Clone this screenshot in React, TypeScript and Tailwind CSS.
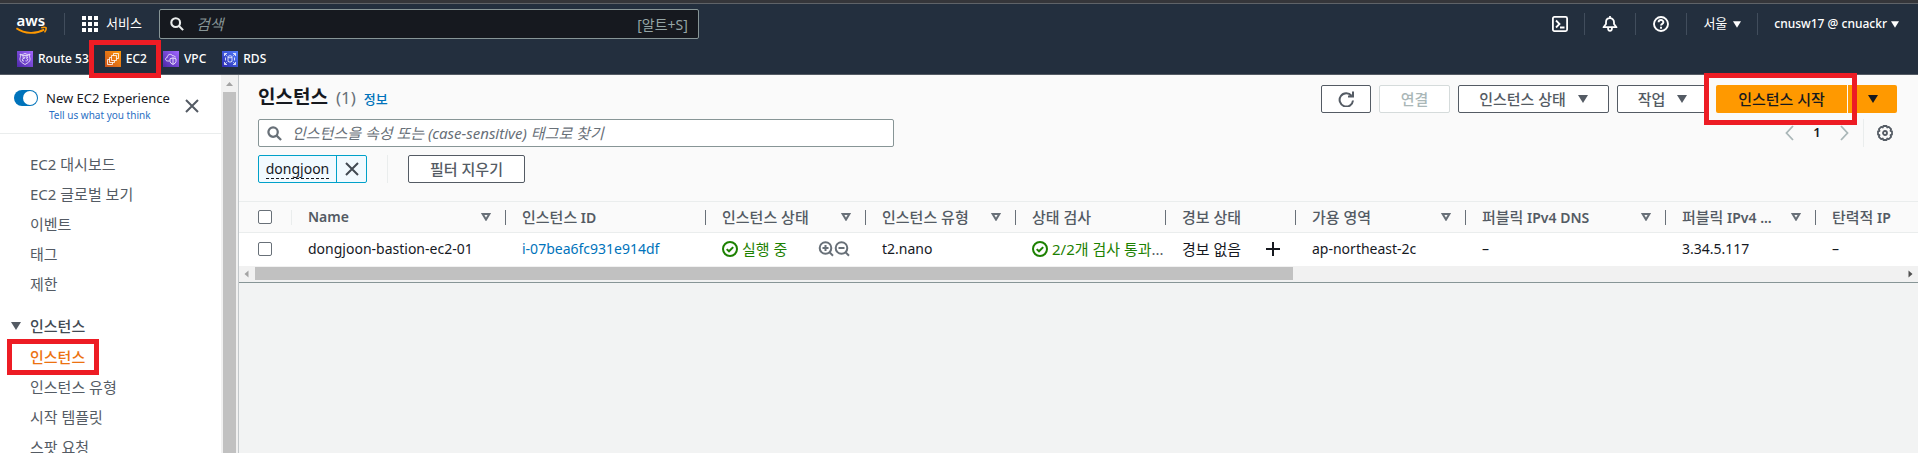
import React from "react";

const SANS = "font-['Noto_Sans','Noto_Sans_CJK_KR',sans-serif]";

function SearchIcon({ className }: { className: string }) {
  return (
    <svg viewBox="0 0 16 16" className={className} fill="none" stroke="currentColor" strokeWidth="2.4" aria-hidden="true">
      <circle cx="6.5" cy="6.5" r="5" />
      <path d="M10 10l5 5" />
    </svg>
  );
}

function CloseIcon({ className }: { className: string }) {
  return (
    <svg viewBox="0 0 14 14" className={className} fill="none" stroke="currentColor" strokeWidth="2" aria-hidden="true">
      <path d="M1 1l12 12M13 1L1 13" />
    </svg>
  );
}

function Caret({ className }: { className: string }) {
  return (
    <svg viewBox="0 0 10 8" className={className} fill="currentColor" aria-hidden="true">
      <path d="M0 0h10L5 8z" />
    </svg>
  );
}

function FilterCaret() {
  return (
    <svg viewBox="0 0 10 8" className="h-2 w-2.5 shrink-0 text-[#687078]" fill="none" stroke="currentColor" strokeWidth="2" aria-hidden="true">
      <path d="M1.6 1h6.8L5 6.600z" />
    </svg>
  );
}

function CheckCircle() {
  return (
    <svg viewBox="0 0 16 16" className="size-4 shrink-0" fill="none" stroke="currentColor" strokeWidth="2" aria-hidden="true">
      <circle cx="8" cy="8" r="7" />
      <path d="M4.7 8.1l2.3 2.2 4.2-4.2" />
    </svg>
  );
}

function Magnifier({ plus }: { plus: boolean }) {
  return (
    <svg viewBox="0 0 16 16" className="size-4 shrink-0" fill="none" stroke="currentColor" strokeWidth="2" aria-hidden="true">
      <circle cx="7.500" cy="7" r="5.8" />
      <path d="M11.500 11.200l3.500 3.500" />
      <path d={plus ? "M4.500 7h6M7.500 4v6" : "M4.500 7h6"} />
    </svg>
  );
}

function AwsLogo() {
  return (
    <svg viewBox="0 0 32 24" className="h-6 w-8 overflow-visible" aria-hidden="true">
      <text x="0.5" y="13.500" fontSize="15" fontWeight="600" fill="#fff" fontFamily="Noto Sans, sans-serif">
        aws
      </text>
      <path d="M0.4 16.200c8.6 6 19.6 6 27.8 1.4" fill="none" stroke="#ff9900" strokeWidth="1.9" />
      <path d="M25.2 15.800c1.8-.6 4-.7 4.8-.2.4 1-.2 3.2-1.5 4.8" fill="none" stroke="#ff9900" strokeWidth="1.5" />
    </svg>
  );
}

function Highlight({ className }: { className: string }) {
  return <span className={`pointer-events-none absolute z-10 border-5 border-[#ed1c24] ${className}`} />;
}

const glyph = "size-4 shrink-0";
const strokes = { fill: "none", stroke: "#fff", strokeWidth: 0.8 } as const;

function Route53Icon() {
  return (
    <svg viewBox="0 0 16 16" className={`${glyph} bg-linear-to-tr from-[#4d27a8] to-[#a166ff]`} aria-hidden="true">
      <path {...strokes} d="M3 3.2c1.5.5 3 .3 5-.7 2 1 3.500 1.200 5 .7-.8 1.600-.5 2.600 0 4.300.5 3-2.500 4.500-5 6-2.500-1.500-5.500-3-5-6 .5-1.700.8-2.700 0-4.300z" />
      <path {...strokes} d="M5.300 6h2v1.500q-2-.3-2 1.300 0 1.700 1.700 1.200M8.500 6h2.200L9.600 7.500q1.700.5.9 1.800-.7 1-2 .5M4.500 4.600h7" />
    </svg>
  );
}

function Ec2Icon() {
  return (
    <svg viewBox="0 0 16 16" className={`${glyph} bg-linear-to-tr from-[#c8511b] to-[#ff9900]`} aria-hidden="true">
      <path {...strokes} d="M6.500 4.500h5v5h-5zM6.500 6.500h-2v5h5v-2M4.500 8.500h-2v5h5v-2M8.500 4.500v-2h5v5h-2" />
    </svg>
  );
}

function VpcIcon() {
  return (
    <svg viewBox="0 0 16 16" className={`${glyph} bg-linear-to-tr from-[#4d27a8] to-[#a166ff]`} aria-hidden="true">
      <path {...strokes} d="M6.500 10H4.500C2 9.800 2 6.700 4.200 6.500 4.300 3.200 8.500 2.200 9.700 5c1.300-.7 2.500.2 2.500 1.500" />
      <path {...strokes} d="M10 6.800l3 1v2.700q-.5 2-3 3-2.500-1-3-3V7.800zM10 7v6" />
    </svg>
  );
}

function RdsIcon() {
  return (
    <svg viewBox="0 0 16 16" className={`${glyph} bg-linear-to-tr from-[#2e27ad] to-[#527fff]`} aria-hidden="true">
      <path {...strokes} d="M2.500 5V2.500H5M11 2.500h2.500V5M2.500 11v2.500H5M11 13.500h2.500V11M2.700 2.700l2 2M13.300 2.700l-2 2M2.700 13.300l2-2M13.300 13.300l-2-2" />
      <ellipse {...strokes} cx="8" cy="5.800" rx="2" ry="1" />
      <path {...strokes} d="M6 5.800v4.600q2 1.500 4 0V5.800M3.500 6.500v3M12.500 6.500v3" />
    </svg>
  );
}

function Divider() {
  return <span className="h-[22px] w-px bg-[#414d5c]" />;
}

function Header() {
  return (
    <header className="border-b border-[#545b64] bg-[#232f3e] text-white">
      <div className="flex h-10 items-center justify-between pr-[19px] pl-4">
        <div className="flex grow items-center">
          <a href="#home" aria-label="AWS">
            <AwsLogo />
          </a>
          <span className="ml-4 h-[22px] w-px bg-[#414d5c]" />
          <button className="ml-[17px] flex items-center gap-2 text-[13px]">
            <svg viewBox="0 0 16 16" className="size-4" fill="currentColor" aria-hidden="true">
              <path d="M0 0h4v4H0zM6 0h4v4H6zM12 0h4v4h-4zM0 6h4v4H0zM6 6h4v4H6zM12 6h4v4h-4zM0 12h4v4H0zM6 12h4v4H6zM12 12h4v4h-4z" />
            </svg>
            서비스
          </button>
          <label className="ml-[17px] flex h-[30px] w-[540px] items-center rounded-xs border border-[#879596] bg-[#16191f] px-2.5">
            <SearchIcon className="size-3.5 shrink-0 text-[#eaeded]" />
            <input
              type="search"
              aria-label="검색"
              placeholder="검색"
              className="ml-3 min-w-0 grow bg-transparent text-[15px] italic outline-none placeholder:text-[#879596]"
            />
            <span className="text-[14px] text-[#95a5a6]">[알트+S]</span>
          </label>
        </div>
        <div className="flex items-center text-[12px] font-medium">
          <button aria-label="CloudShell" className="mr-4">
            <svg viewBox="0 0 16 16" className="size-4" fill="none" stroke="currentColor" strokeWidth="1.8" aria-hidden="true">
              <rect x="0.900" y="0.900" width="14.200" height="14.200" rx="1.500" />
              <path d="M4 4.500L7.500 8 4 11.500M8 11.500h4.500" />
            </svg>
          </button>
          <Divider />
          <button aria-label="알림" className="mx-[17px]">
            <svg viewBox="0 0 16 16" className="size-4" fill="none" stroke="currentColor" strokeWidth="1.800" aria-hidden="true">
              <path d="M1.500 11.200h13L12 8V6.200C12 3.800 10.300 2.200 8 2.200S4 3.800 4 6.200V8zM8 2.200V0M6 11.500c0 4.600 4 4.600 4 0" strokeLinejoin="round" />
            </svg>
          </button>
          <Divider />
          <button aria-label="도움말" className="mx-[17px]">
            <svg viewBox="0 0 16 16" className="size-4" fill="none" stroke="currentColor" strokeWidth="1.900" aria-hidden="true">
              <circle cx="8" cy="8" r="7" />
              <path d="M5.600 6.300c0-3 4.800-3 4.800 0C10.400 8 8 7.800 8 9.600M8 10.800v1.900" />
            </svg>
          </button>
          <Divider />
          <button className="mx-4 flex items-center gap-1.5 font-normal">
            <span className="text-[13px]">서울</span>
            <Caret className="h-[7px] w-2" />
          </button>
          <Divider />
          <button className="ml-4 flex items-center gap-1">
            cnusw17 @ cnuackr
            <Caret className="h-[7px] w-2" />
          </button>
        </div>
      </div>
      <nav className="flex h-[30px] items-center gap-4 pl-[17px] text-[12px] font-medium">
        <a href="#route53" className="flex items-center gap-[5px]">
          <Route53Icon />
          Route 53
        </a>
        <a href="#ec2" className="relative flex items-center gap-[5px]">
          <Ec2Icon />
          EC2
          <Highlight className="-inset-y-2.5 -right-3.5 -left-4" />
        </a>
        <a href="#vpc" className="flex items-center gap-[5px]">
          <VpcIcon />
          VPC
        </a>
        <a href="#rds" className="flex items-center gap-[5px]">
          <RdsIcon />
          RDS
        </a>
      </nav>
    </header>
  );
}

function NavItem({ label, active }: { label: string; active?: boolean }) {
  return (
    <li className="flex h-[30px] items-center">
      <a href="#nav" className={active ? "relative font-medium text-[#ec7211]" : "text-[#545b64]"}>
        {label}
        {active && <Highlight className="-inset-y-[7px] -right-3.5 -left-[23px]" />}
      </a>
    </li>
  );
}

function Sidebar() {
  return (
    <div className="flex w-[239px] shrink-0 overflow-hidden border-r border-[#c3c8cb] bg-white">
      <aside className="grow">
        <div className="flex h-[59px] items-center border-b border-[#eaeded] pl-3.5">
          <div className="grow pt-0.5">
            <label className="flex items-center gap-2 text-[13px] leading-5 text-[#16191f]">
              <input type="checkbox" role="switch" defaultChecked className="peer sr-only" />
              <span className="flex h-4 w-6 shrink-0 items-center justify-end rounded-full bg-[#0073bb] pr-px">
                <span className="size-3.5 rounded-full bg-white" />
              </span>
              <span className="whitespace-nowrap">New EC2 Experience</span>
            </label>
            <a href="#feedback" className="ml-[35px] block text-[10px] leading-3.5 text-[#2a6fc4]">
              Tell us what you think
            </a>
          </div>
          <button aria-label="닫기" className="mt-1 mr-[22px] text-[#545b64]">
            <CloseIcon className="size-3.5" />
          </button>
        </div>
        <nav className="pt-[15px] text-[15px] whitespace-nowrap">
          <ul className="pl-[30px]">
            {["EC2 대시보드", "EC2 글로벌 보기", "이벤트", "태그", "제한"].map((l) => (
              <NavItem key={l} label={l} />
            ))}
          </ul>
          <button className="mt-3 flex h-[30px] items-center gap-[9px] pl-[11px] font-medium text-[#424a53]">
            <Caret className="h-2 w-2.5 text-[#545b64]" />
            인스턴스
          </button>
          <ul className="mt-px pl-[30px]">
            <NavItem label="인스턴스" active />
            {["인스턴스 유형", "시작 템플릿", "스팟 요청"].map((l) => (
              <NavItem key={l} label={l} />
            ))}
          </ul>
        </nav>
      </aside>
      <div className="flex w-[17px] shrink-0 flex-col items-center bg-[#f1f1f1]">
        <svg viewBox="0 0 17 17" className="size-[17px] shrink-0 text-[#a3a3a3]" fill="currentColor" aria-hidden="true">
          <path d="M5 11h7L8.500 7z" />
        </svg>
        <div className="w-[13px] grow bg-[#c1c1c1]" />
      </div>
    </div>
  );
}

const outline = "flex h-7 items-center justify-center rounded-xs border border-[#545b64] bg-white text-[15px] font-medium text-[#545b64]";

function Toolbar() {
  return (
    <div className="flex h-7 items-center justify-between">
      <h1 className="flex h-7 items-baseline gap-2 text-[19px] leading-6 font-bold text-[#16191f]">
        인스턴스
        <span className="text-[17px] font-normal text-[#687078]">(1)</span>
        <a href="#info" className="text-[13px] font-medium text-[#0073bb]">
          정보
        </a>
      </h1>
      <div className="flex gap-2">
        <button aria-label="새로 고침" className={`${outline} w-[50px]`}>
          <svg viewBox="0 0 16 16" className="size-4" fill="none" stroke="currentColor" strokeWidth="2" aria-hidden="true">
            <path d="M13.500 4.600A6.700 6.700 0 1 0 15 9.500M15 .5v5h-5" />
          </svg>
        </button>
        <button disabled className="flex h-7 w-[71px] items-center justify-center rounded-xs border border-[#d5dbdb] bg-white text-[15px] font-medium text-[#aab7b8]">
          연결
        </button>
        <button className={`${outline} w-[151px] gap-3`}>
          인스턴스 상태
          <Caret className="h-2 w-2.5" />
        </button>
        <button className={`${outline} w-[91px] gap-3`}>
          작업
          <Caret className="h-2 w-2.5" />
        </button>
        <div className="flex gap-px">
          <div className="relative">
            <button className="h-7 w-[131px] rounded-l-xs bg-[#ff9900] text-[15px] font-medium text-[#16191f]">인스턴스 시작</button>
            <Highlight className="-inset-y-3 -right-2.5 -left-3" />
          </div>
          <button aria-label="시작 옵션" className="flex h-7 w-[49px] items-center justify-center rounded-r-xs bg-[#ff9900] text-[#16191f]">
            <Caret className="h-2 w-2.5" />
          </button>
        </div>
      </div>
    </div>
  );
}

function Filters() {
  return (
    <>
      <div className="mt-1.5 flex h-7 items-center justify-between">
        <label className="flex h-7 w-[636px] items-center rounded-xs border border-[#879596] bg-white px-2">
          <SearchIcon className="size-[15px] shrink-0 text-[#687078]" />
          <input
            type="search"
            aria-label="인스턴스 찾기"
            placeholder="인스턴스을 속성 또는 (case-sensitive) 태그로 찾기"
            className="ml-2.5 min-w-0 grow bg-transparent text-[15px] italic outline-none placeholder:text-[#687078]"
          />
        </label>
        <div className="flex items-center pr-1">
          <button aria-label="이전 페이지" className="text-[#aab7b8]">
            <svg viewBox="0 0 9 16" className="h-4 w-[9px]" fill="none" stroke="currentColor" strokeWidth="1.800" aria-hidden="true">
              <path d="M8 1L1.500 8 8 15" />
            </svg>
          </button>
          <span className="w-[46px] text-center text-[13px] font-semibold text-[#16191f]">1</span>
          <button aria-label="다음 페이지" className="text-[#aab7b8]">
            <svg viewBox="0 0 9 16" className="h-4 w-[9px]" fill="none" stroke="currentColor" strokeWidth="1.800" aria-hidden="true">
              <path d="M1 1l6.500 7L1 15" />
            </svg>
          </button>
          <span className="mr-[13px] ml-3.5 h-7 w-px bg-[#eaeded]" />
          <button aria-label="기본 설정" className="text-[#545b64]">
            <svg viewBox="0 0 16 16" className="size-4" fill="none" stroke="currentColor" strokeWidth="1.800" strokeLinejoin="round" aria-hidden="true">
              <path d="M6.400 1h3.200l.6 1.500 1.600-.6 2.300 2.300-.6 1.600 1.500.6v3.200l-1.500.6.6 1.600-2.300 2.300-1.600-.6L9.600 15H6.400l-.6-1.500-1.600.6-2.300-2.300.6-1.600L1 9.600V6.400l1.500-.6-.6-1.600 2.300-2.300 1.600.6z" />
              <circle cx="8" cy="8" r="2" />
            </svg>
          </button>
        </div>
      </div>
      <div className="mt-2 flex h-7 items-center">
        <div className="flex h-7 w-[109px] rounded-xs border border-[#00a1c9] bg-[#f1faff] text-[14px] text-[#16191f]">
          <span className="flex grow items-center justify-center">
            <button className="border-b border-dashed border-[#16191f] leading-[18px]">dongjoon</button>
          </span>
          <button aria-label="필터 제거" className="flex w-[30px] items-center justify-center border-l border-[#00a1c9] text-[#424a53]">
            <CloseIcon className="size-3.5" />
          </button>
        </div>
        <span className="mx-5 h-7 w-px bg-[#eaeded]" />
        <button className={`${outline} w-[117px]`}>필터 지우기</button>
      </div>
    </>
  );
}

type Column = { ko?: string; latin?: string; filter?: boolean; width: string };

const columns: Column[] = [
  { latin: "Name", filter: true, width: "w-[214px]" },
  { ko: "인스턴스", latin: "ID", width: "w-[200px]" },
  { ko: "인스턴스 상태", filter: true, width: "w-[160px]" },
  { ko: "인스턴스 유형", filter: true, width: "w-[150px]" },
  { ko: "상태 검사", width: "w-[150px]" },
  { ko: "경보 상태", width: "w-[130px]" },
  { ko: "가용 영역", filter: true, width: "w-[170px]" },
  { ko: "퍼블릭", latin: "IPv4 DNS", filter: true, width: "w-[200px]" },
  { ko: "퍼블릭", latin: "IPv4 ...", filter: true, width: "w-[150px]" },
  { ko: "탄력적", latin: "IP", width: "w-auto" },
];

const box = "block size-3.5 appearance-none rounded-xs border border-[#687078] bg-white";

function InstanceTable() {
  return (
    <table className="w-full table-fixed border-collapse text-left text-[14px] leading-5 whitespace-nowrap text-[#16191f]">
      <thead>
        <tr className="h-[31px] border-y border-[#eaeded] text-[#545b64]">
          <th className="w-[53px] p-0">
            <div className="flex h-[15px] items-center border-r border-[#eaeded] pl-[19px]">
              <input type="checkbox" aria-label="모두 선택" className={box} />
            </div>
          </th>
          {columns.map((c, i) => (
            <th key={i} className={`${c.width} p-0 font-medium`}>
              <div
                className={`flex h-[15px] items-center justify-between pr-3.5 pl-4 ${
                  i < columns.length - 1 ? "border-r border-[#687078]" : ""
                }`}
              >
                <span>
                  {c.ko && <span className="text-[15px]">{c.ko}</span>}
                  {c.ko && c.latin && " "}
                  {c.latin && <span className="font-semibold">{c.latin}</span>}
                </span>
                {c.filter && <FilterCaret />}
              </div>
            </th>
          ))}
        </tr>
      </thead>
      <tbody>
        <tr className="h-[33px] bg-white">
          <td className="p-0 pl-[19px]">
            <input type="checkbox" aria-label="dongjoon-bastion-ec2-01 선택" className={box} />
          </td>
          <td className="p-0 pl-4">dongjoon-bastion-ec2-01</td>
          <td className="p-0 pl-4">
            <a href="#instance" className="text-[#0073bb]">
              i-07bea6fc931e914df
            </a>
          </td>
          <td className="p-0 pr-4 pl-4">
            <div className="flex items-center justify-between">
              <span className="flex items-center gap-1 text-[15px] text-[#1d8102]">
                <CheckCircle />
                실행 중
              </span>
              <span className="flex text-[#687078]">
                <Magnifier plus />
                <Magnifier plus={false} />
              </span>
            </div>
          </td>
          <td className="p-0 pl-4">t2.nano</td>
          <td className="p-0 pl-4">
            <div className="flex items-center gap-1 text-[15px] text-[#1d8102]">
              <CheckCircle />
              <span>
                2/2개 검사 통과<span className="text-[#545b64]">...</span>
              </span>
            </div>
          </td>
          <td className="p-0 pr-4 pl-4">
            <div className="flex items-center justify-between">
              <span className="text-[15px]">경보 없음</span>
              <svg viewBox="0 0 14 14" className="size-3.5" stroke="currentColor" strokeWidth="2" aria-hidden="true">
                <path d="M7 0v14M0 7h14" />
              </svg>
            </div>
          </td>
          <td className="p-0 pl-4">ap-northeast-2c</td>
          <td className="p-0 pl-4">–</td>
          <td className="p-0 pl-4">3.34.5.117</td>
          <td className="p-0 pl-4">–</td>
        </tr>
      </tbody>
    </table>
  );
}

export default function App() {
  return (
    <div className={`flex h-screen flex-col overflow-hidden bg-[#f2f3f3] ${SANS}`}>
      <div className="h-1 shrink-0 border-b border-[#5f6368] bg-[#35363a]" />
      <Header />
      <div className="flex min-h-0 grow">
        <Sidebar />
        <main className="min-w-0 grow">
          <section className="border-b border-[#879596] bg-[#fafafa]">
            <div className="pt-2.5 pr-[21px] pb-[18px] pl-[19px]">
              <Toolbar />
              <Filters />
            </div>
            <InstanceTable />
            <div className="flex h-4 items-center bg-[#f1f1f1]">
              <svg viewBox="0 0 16 16" className="size-4 text-[#a3a3a3]" fill="currentColor" aria-hidden="true">
                <path d="M9.500 4.500v7L5.500 8z" />
              </svg>
              <div className="grow">
                <div className="h-[13px] w-[63%] bg-[#c1c1c1]" />
              </div>
              <svg viewBox="0 0 16 16" className="size-4 text-[#505050]" fill="currentColor" aria-hidden="true">
                <path d="M6.500 4.500v7l4-3.500z" />
              </svg>
            </div>
          </section>
        </main>
      </div>
    </div>
  );
}
